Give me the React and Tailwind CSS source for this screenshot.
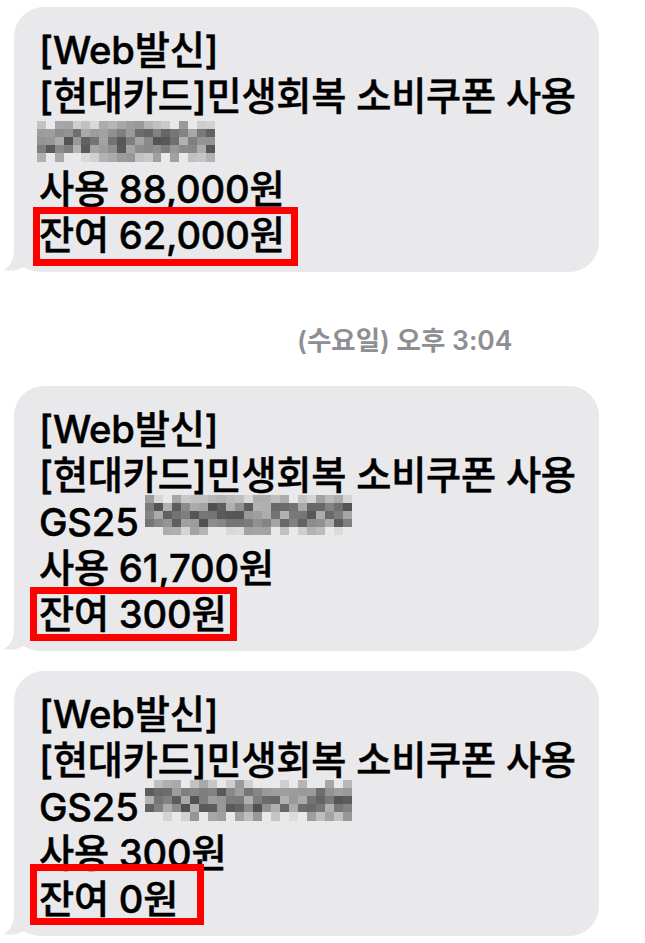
import React from 'react';

const BUBBLE = '#e9e9eb';

// seeded grays for the pixelated (censored) shop names
function makeCells(seed, cols, rows) {
  let s = seed;
  const rand = () => {
    s = (s * 9301 + 49297) % 233280;
    return s / 233280;
  };
  const cells = [];
  for (let r = 0; r < rows; r++) {
    for (let c = 0; c < cols; c++) {
      const edge = r === 0 || r === rows - 1;
      let v = edge ? 150 + rand() * 70 : 80 + rand() * 100;
      if (edge && rand() < 0.3) v = 233;
      cells.push(Math.round(v));
    }
  }
  return cells;
}

function Mosaic({ seed, cols, className }) {
  const cells = makeCells(seed, cols, 5);
  return (
    <div className={className}>
      {cells.map((v, i) => (
        <div key={i} style={{ backgroundColor: `rgb(${v},${v},${v + 1})` }} />
      ))}
    </div>
  );
}

function Tail() {
  return (
    <svg
      className="absolute left-[-12px] bottom-0"
      width="44"
      height="30"
      viewBox="0 0 44 30"
    >
      <path
        d="M12 0 L12 8 C12 18 8 25 1 28 C8 29.5 16 28.5 22 25 C26 28 32 30 44 30 L44 0 Z"
        fill={BUBBLE}
      />
    </svg>
  );
}

function Bubble({ third, last, box, className }) {
  return (
    <div
      className={
        'relative ml-[14px] w-[585px] h-[265px] rounded-[30px] bg-[#e9e9eb] pl-[25px] pt-[20px] text-[38.2px] leading-[46.3px] tracking-[-0.2px] text-black whitespace-nowrap [-webkit-text-stroke:0.5px_#000] ' +
        (className || '')
      }
    >
      <Tail />
      <div className="relative">[Web발신]</div>
      <div className="relative">[현대카드]민생회복 소비쿠폰 사용</div>
      <div className="relative flex h-[46.3px]">{third}</div>
      <div className="relative">{last[0]}</div>
      <div className="relative">{last[1]}</div>
      <div className={'absolute border-[7px] border-[#ff0000] ' + box} />
    </div>
  );
}

export default function App() {
  return (
    <div
      className="w-[645px] h-[943px] bg-white overflow-hidden font-medium"
      style={{ fontFamily: 'Inter, "Noto Sans CJK KR", sans-serif' }}
    >
      <div className="h-[7px]" />
      <Bubble
        third={
          <Mosaic
            seed={11}
            cols={20}
            className="ml-[-2px] mt-[1px] grid grid-cols-[repeat(20,8.9px)] auto-rows-[8.2px] h-[41px]"
          />
        }
        last={['사용 88,000원', '잔여 62,000원']}
        box="left-[19px] top-[200px] w-[265px] h-[59px]"
      />

      <div className="pt-[55px] pb-[33px] pl-[297px] text-[26.5px] leading-[26px] font-semibold text-[#8e8e93]">
        (수요일) 오후 3:04
      </div>

      <Bubble
        third={
          <>
            <span className="w-[106px]">GS25</span>
            <Mosaic
              seed={47}
              cols={23}
              className="mt-[-4px] grid grid-cols-[repeat(23,9px)] auto-rows-[8px] h-[40px]"
            />
          </>
        }
        last={['사용 61,700원', '잔여 300원']}
        box="left-[16px] top-[201px] w-[207px] h-[54px]"
      />

      <Bubble
        className="mt-[20px]"
        third={
          <>
            <span className="w-[106px]">GS25</span>
            <Mosaic
              seed={83}
              cols={23}
              className="mt-[-4px] grid grid-cols-[repeat(23,9px)] auto-rows-[8.2px] h-[41px]"
            />
          </>
        }
        last={['사용 300원', '잔여 0원']}
        box="left-[16px] top-[193px] w-[174px] h-[61px]"
      />
    </div>
  );
}
